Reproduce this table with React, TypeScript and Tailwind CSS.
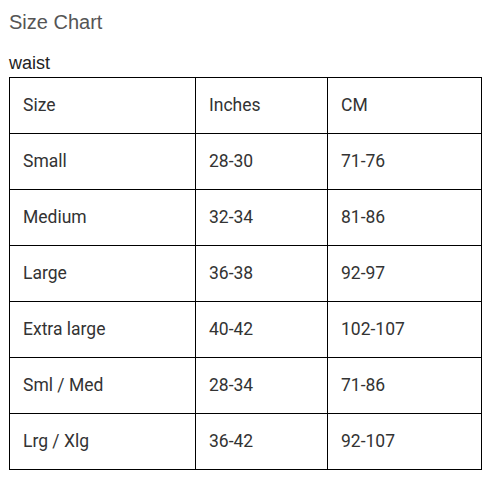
const rows = [
  ['Size', 'Inches', 'CM'],
  ['Small', '28-30', '71-76'],
  ['Medium', '32-34', '81-86'],
  ['Large', '36-38', '92-97'],
  ['Extra large', '40-42', '102-107'],
  ['Sml / Med', '28-34', '71-86'],
  ['Lrg / Xlg', '36-42', '92-107'],
];

export default function App() {
  return (
    <div className="min-h-screen bg-white pl-[9px] pt-[9px]">
      <h2 className="font-['Liberation_Sans',Arial,sans-serif] text-[20px] leading-[26px] text-[#555]">
        Size Chart
      </h2>
      <h3 className="mt-[17px] font-['Liberation_Sans',Arial,sans-serif] text-[18px] leading-[22px] text-[#222]">
        waist
      </h3>
      <table className="mt-[3px] w-[472px] table-fixed border-collapse font-['Roboto',sans-serif] text-[17.5px] text-[#333]">
        <colgroup>
          <col className="w-[186px]" />
          <col className="w-[132px]" />
          <col className="w-[154px]" />
        </colgroup>
        <tbody>
          {rows.map((r) => (
            <tr key={r[0]} className="h-[56px]">
              {r.map((c, i) => (
                <td key={i} className="border border-black pl-[13px] align-middle">
                  {c}
                </td>
              ))}
            </tr>
          ))}
        </tbody>
      </table>
    </div>
  );
}
